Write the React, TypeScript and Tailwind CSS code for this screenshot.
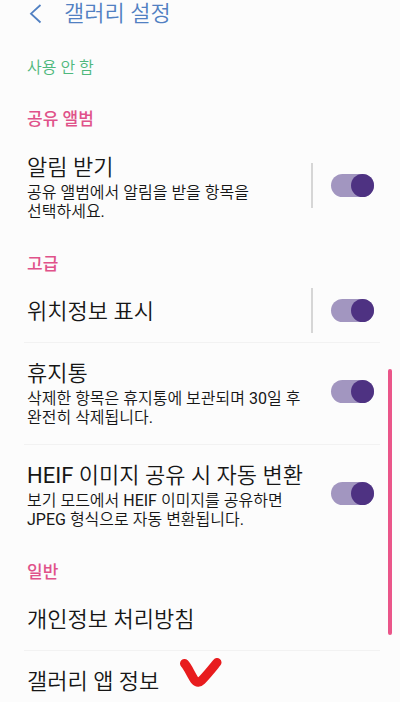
import { useState } from "react";
import type { ReactNode } from "react";

function Section({ title, children }: { title: string; children: ReactNode }) {
  return (
    <section>
      <h2 className="px-[27px] pt-[15px] pb-[7px] font-['Roboto','Noto_Sans_CJK_KR',sans-serif] text-[17px] leading-[22px] font-medium text-[#e0528a]">
        {title}
      </h2>
      {children}
    </section>
  );
}

function Divider() {
  return <hr className="mr-5 ml-6 border-t border-[#f2f2f2]" />;
}

type SwitchRowProps = {
  id: string;
  title: string;
  description?: string;
  separated?: boolean;
};

function SwitchRow({ id, title, description, separated }: SwitchRowProps) {
  const [on, setOn] = useState(true);
  return (
    <div className="flex items-center pr-[26px] pl-[27px]">
      <label htmlFor={id} className={description ? "min-w-0 flex-1 pt-4 pb-[17px]" : "min-w-0 flex-1 py-[15px]"}>
        <span className="block text-[22px] leading-[30px] whitespace-nowrap">{title}</span>
        {description && (
          <span className="block max-w-[276px] text-[16px] leading-[19px] break-keep">
            {description}
          </span>
        )}
      </label>
      <div className="mb-1 flex items-center gap-[18px]">
        {separated && <span className="h-[45px] w-0.5 bg-[#d6d6d6]" />}
        <input
          id={id}
          type="checkbox"
          role="switch"
          checked={on}
          onChange={(e) => setOn(e.target.checked)}
          className="flex h-[23px] w-[43px] shrink-0 appearance-none items-center rounded-full bg-[#c4c4c4] before:size-[23px] before:rounded-full before:bg-[#8a8a8a] checked:justify-end checked:bg-[#a296c0] checked:before:bg-[#4e3282]"
        />
      </div>
    </div>
  );
}

function LinkRow({ title, children }: { title: string; children?: ReactNode }) {
  return (
    <a href="#" className="flex items-center py-[15px] pl-[27px] text-[22px] leading-[30px]">
      {title}
      {children}
    </a>
  );
}

export default function App() {
  return (
    <div className="relative h-screen overflow-hidden bg-[#fcfcfc] font-['Roboto','Noto_Sans_CJK_KR_DemiLight','Noto_Sans_CJK_KR',sans-serif] font-normal text-[#161616]">
      <header className="flex h-7 items-center gap-[22px] pl-[29px] text-[#5180c2]">
        <button type="button" aria-label="뒤로">
          <svg width="13" height="20" viewBox="0 0 13 20" fill="none" stroke="currentColor" strokeWidth="1.8">
            <path d="M11.5 1 2 9.7l9.5 8.8" />
          </svg>
        </button>
        <h1 className="text-[22px] leading-7">갤러리 설정</h1>
      </header>

      <main>
        <p className="px-[27px] pt-[29px] pb-3.5 text-[16px] leading-[22px] text-[#4fb87c]">
          사용 안 함
        </p>

        <Section title="공유 앨범">
          <SwitchRow
            id="notifications"
            title="알림 받기"
            description="공유 앨범에서 알림을 받을 항목을 선택하세요."
            separated
          />
        </Section>

        <Section title="고급">
          <SwitchRow id="location" title="위치정보 표시" separated />
          <Divider />
          <SwitchRow
            id="trash"
            title="휴지통"
            description="삭제한 항목은 휴지통에 보관되며 30일 후 완전히 삭제됩니다."
          />
          <Divider />
          <SwitchRow
            id="heif"
            title="HEIF 이미지 공유 시 자동 변환"
            description="보기 모드에서 HEIF 이미지를 공유하면 JPEG 형식으로 자동 변환됩니다."
          />
        </Section>

        <Section title="일반">
          <LinkRow title="개인정보 처리방침" />
          <Divider />
          <LinkRow title="갤러리 앱 정보">
            <svg className="-my-2 mb-2 ml-5" width="44" height="32" viewBox="0 0 44 32" fill="none" aria-hidden="true">
              <path
                d="M5.500 5.500C9 9 12 17 16 22.500C18 25 20.500 24.500 22.500 22.500C28 17 33.500 10 38 4.500"
                stroke="#e81c1e"
                strokeWidth="9"
                strokeLinecap="round"
                strokeLinejoin="round"
              />
            </svg>
          </LinkRow>
        </Section>
      </main>

      {/* scroll thumb */}
      <div className="absolute top-[52.5%] right-2 h-[38%] w-1 rounded-full bg-[#ea5589]" />
    </div>
  );
}
